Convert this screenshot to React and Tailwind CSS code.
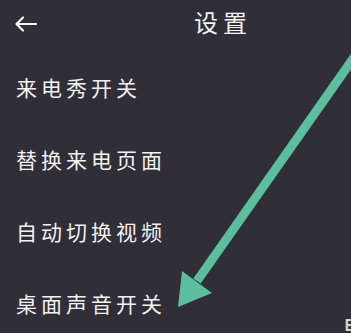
import React from "react";

const items = ["来电秀开关", "替换来电页面", "自动切换视频", "桌面声音开关"];

const App = () => {
  return (
    <div
      className="relative w-[351px] h-[333px] overflow-hidden bg-[#302e36] text-[#f2f2f2]"
      style={{ fontFamily: '"Noto Sans CJK SC", "Noto Sans", sans-serif' }}
    >
      {/* header */}
      <div className="flex items-center h-[44px] pl-[14px]">
        <svg className="mt-[4px]" width="24" height="16" viewBox="0 0 24 16" fill="none" stroke="#f5f5f5" strokeWidth="2.2" strokeLinecap="round" strokeLinejoin="round">
          <path d="M22 8H3" />
          <path d="M9 1.5L2.5 8L9 14.5" />
        </svg>
        <h1 className="ml-[156px] text-[24px] leading-none tracking-[5px] font-normal">设置</h1>
      </div>

      {/* list */}
      <div className="flex flex-col pt-[8px]">
        {items.map((label) => (
          <div key={label} className="flex items-center h-[72px] pl-[16px] text-[21px] tracking-[4px]">
            {label}
          </div>
        ))}
      </div>

      {/* annotation arrow */}
      <svg className="absolute inset-0 pointer-events-none" width="351" height="333" viewBox="0 0 351 333">
        <line x1="362" y1="46" x2="197" y2="281" stroke="#5bbf9d" strokeWidth="9" />
        <polygon points="178,307 182,271 212,293" fill="#5bbf9d" />
      </svg>

      <span className="absolute right-[-3px] bottom-[1px] text-[16px] font-bold text-[#d4d4d4] leading-none">E</span>
    </div>
  );
};

export default App;
